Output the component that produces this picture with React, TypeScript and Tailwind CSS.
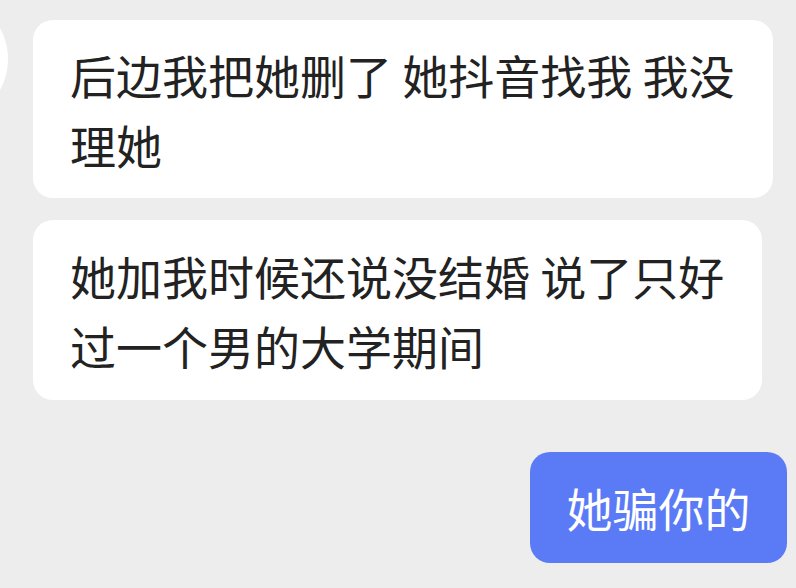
import React from "react";

export default function App() {
  const font = { fontFamily: '"Noto Sans CJK SC", "Noto Sans", sans-serif' };
  return (
    <div
      className="relative w-[796px] h-[588px] overflow-hidden bg-[#ededed]"
      style={font}
    >
      <div className="absolute left-[-120px] top-[-5px] w-[128px] h-[128px] rounded-full bg-white" />
      <div className="flex flex-col pl-[33px] pr-[9px] pt-[20px]">
        <div className="w-[740px] h-[178px] rounded-[20px] bg-white pl-[37px] pt-[19px] text-[46px] leading-[70px] text-[#222222]">
          <div>后边我把她删了 她抖音找我 我没</div>
          <div>理她</div>
        </div>
        <div className="mt-[22px] w-[729px] h-[180px] rounded-[20px] bg-white pl-[37px] pt-[20px] text-[46px] leading-[70px] text-[#222222]">
          <div>她加我时候还说没结婚 说了只好</div>
          <div>过一个男的大学期间</div>
        </div>
        <div className="mt-[52px] self-end w-[257px] h-[111px] rounded-[20px] bg-[#5a7bf5] flex items-center justify-center text-[46px] text-white">
          她骗你的
        </div>
      </div>
    </div>
  );
}
